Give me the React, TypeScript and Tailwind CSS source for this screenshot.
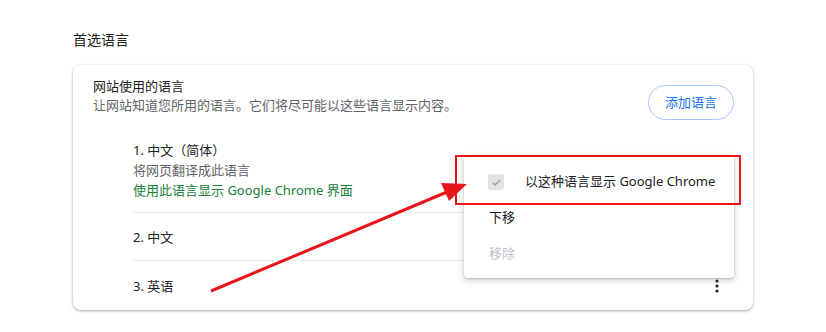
const font = { fontFamily: '"Noto Sans", "Noto Sans CJK SC", sans-serif' };

type Lang = {
  title: string;
  lines?: { text: string; tone: "gray" | "green" }[];
};

const langs: Lang[] = [
  {
    title: "1. 中文（简体）",
    lines: [
      { text: "将网页翻译成此语言", tone: "gray" },
      { text: "使用此语言显示 Google Chrome 界面", tone: "green" },
    ],
  },
  { title: "2. 中文" },
  { title: "3. 英语" },
];

const Kebab = () => (
  <svg width="4" height="14" viewBox="0 0 4 14" className="shrink-0">
    <circle cx="2" cy="2" r="1.6" fill="#202124" />
    <circle cx="2" cy="7" r="1.6" fill="#202124" />
    <circle cx="2" cy="12" r="1.6" fill="#202124" />
  </svg>
);

const LangRow = ({ lang, last }: { lang: Lang; last: boolean }) => {
  return (
    <div
      className={`flex items-center justify-between ${
        lang.lines ? "py-[12px]" : last ? "min-h-[49px]" : "min-h-[48px]"
      } ${last ? "" : "border-b border-[#e8eaed]"}`}
    >
      <div className="leading-[20px]">
        <p className="text-[#202124]">{lang.title}</p>
        {lang.lines?.map((l) => (
          <p
            key={l.text}
            className={l.tone === "green" ? "text-[#188038]" : "text-[#5f6368]"}
          >
            {l.text}
          </p>
        ))}
      </div>
      <div className="pr-[14px]">
        <Kebab />
      </div>
    </div>
  );
};

const Menu = () => {
  return (
    <div className="absolute left-[391px] top-[91px] w-[270px] bg-white rounded-[4px] pt-[8px] pb-[6px] shadow-[0_2px_6px_2px_rgba(60,64,67,0.15),0_1px_2px_rgba(60,64,67,0.3)]">
      <div className="h-[36px] flex items-center pl-[24px]">
        <span className="w-[16px] h-[16px] rounded-[2px] bg-[#e3e3e3] flex items-center justify-center">
          <svg width="11" height="11" viewBox="0 0 24 24">
            <path d="M4 12.5l5 5L20 6.5" fill="none" stroke="#9aa0a6" strokeWidth="3" />
          </svg>
        </span>
        <span className="ml-[21px] text-[#202124]">以这种语言显示 Google Chrome</span>
      </div>
      <div className="h-[36px] flex items-center pl-[25px] text-[#202124]">下移</div>
      <div className="h-[36px] flex items-center pl-[25px] text-[#bdc1c6]">移除</div>
    </div>
  );
};

export default function App() {
  return (
    <div style={font} className="relative w-[826px] h-[332px] bg-white text-[13px] overflow-hidden">
      <div className="pl-[73px] pt-[30px]">
        <h2 className="text-[14px] leading-[20px] text-[#202124] mb-[15px]">首选语言</h2>

        <div className="relative w-[680px] bg-white rounded-[8px] shadow-[0_1px_2px_rgba(60,64,67,0.3),0_1px_3px_1px_rgba(60,64,67,0.15)]">
          <div className="flex justify-between items-start pl-[20px] pr-[19px] pt-[12px]">
            <div className="leading-[19px]">
              <p className="text-[#202124]">网站使用的语言</p>
              <p className="text-[#5f6368]">让网站知道您所用的语言。它们将尽可能以这些语言显示内容。</p>
            </div>
            <button className="mt-[8px] h-[35px] w-[86px] rounded-full border border-[#a8c7fa] text-[#1a73e8] text-[13px] bg-white">
              添加语言
            </button>
          </div>

          <div className="pl-[60px] pr-[20px] pt-[8px]">
            {langs.map((l, i) => (
              <LangRow key={l.title} lang={l} last={i === langs.length - 1} />
            ))}
          </div>

          <Menu />
          <div className="absolute left-[382px] top-[90px] w-[286px] h-[50px] border-2 border-[#e8141c] pointer-events-none" />
        </div>
      </div>

      <svg className="absolute inset-0 pointer-events-none" width="826" height="332">
        <line x1="211" y1="291" x2="447" y2="192" stroke="#e8141c" strokeWidth="3" />
        <polygon points="467,184 449,201 441,183" fill="#e8141c" />
      </svg>
    </div>
  );
}
